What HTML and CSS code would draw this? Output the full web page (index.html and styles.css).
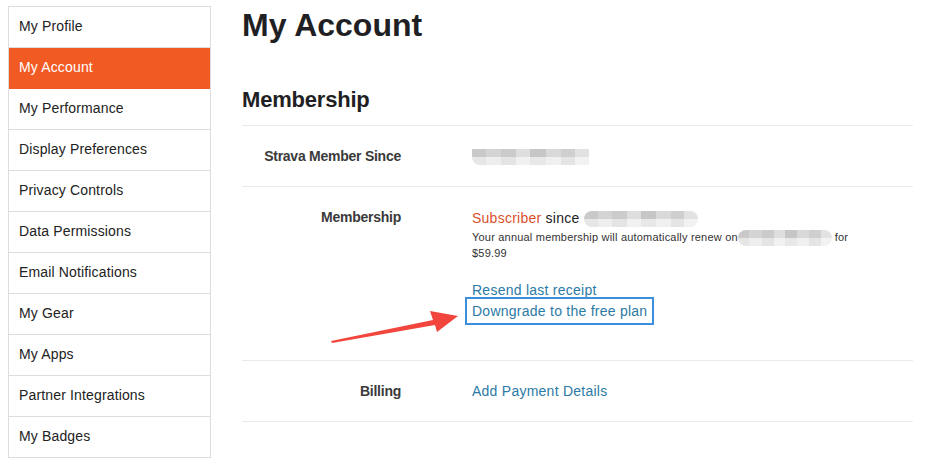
FILE: index.html
```html
<!DOCTYPE html>
<html lang="en">
<head>
  <meta charset="UTF-8">
  <title>My Account</title>
  <link rel="stylesheet" href="styles.css">
</head>
<body>
  <nav class="sidebar">
    <a href="#">My Profile</a>
    <a href="#" class="active">My Account</a>
    <a href="#">My Performance</a>
    <a href="#">Display Preferences</a>
    <a href="#">Privacy Controls</a>
    <a href="#">Data Permissions</a>
    <a href="#">Email Notifications</a>
    <a href="#">My Gear</a>
    <a href="#">My Apps</a>
    <a href="#">Partner Integrations</a>
    <a href="#">My Badges</a>
  </nav>

  <main class="content">
    <h1>My Account</h1>
    <h2>Membership</h2>

    <div class="row">
      <div class="label">Strava Member Since</div>
      <div class="value"><span class="blur blur-since"></span></div>
    </div>

    <div class="row row-tall">
      <div class="label">Membership</div>
      <div class="value">
        <div class="status"><span class="sub">Subscriber</span> since <span class="blur blur-sub"></span></div>
        <p class="note">Your annual membership will automatically renew on<span class="blur blur-date"></span>for<br>$59.99</p>
        <div class="links">
          <a href="#">Resend last receipt</a><br>
          <a href="#" class="boxed">Downgrade to the free plan</a>
        </div>
      </div>
    </div>

    <div class="row">
      <div class="label">Billing</div>
      <div class="value"><a href="#">Add Payment Details</a></div>
    </div>
  </main>

  <!-- annotation arrow -->
  <svg class="arrow" width="950" height="466" viewBox="0 0 950 466">
    <polygon points="331,341 433,320 430,311 458,316 437,332 435,325 332,343" fill="#f2453d"/>
  </svg>
</body>
</html>
```

FILE: styles.css
```css
body {
  margin: 0;
  padding: 6px 8px;
  font-family: 'Liberation Sans', Arial, sans-serif;
  color: #222;
  background: #fff;
  display: flex;
  align-items: flex-start;
}
.sidebar {
  width: 201px;
  border: 1px solid #ddd;
  border-bottom: none;
  display: flex;
  flex-direction: column;
}
.sidebar a {
  display: block;
  height: 39px;
  line-height: 39px;
  padding: 0 0 1px 10px;
  border-bottom: 1px solid #ddd;
  font-size: 14px;
  letter-spacing: 0.15px;
  color: #222;
  text-decoration: none;
}
.sidebar a.active {
  background: #f25a24;
  color: #fff;
  border-bottom-color: #f25a24;
}
.content {
  margin-left: 31px;
  width: 671px;
}
h1 {
  margin: 0;
  font-size: 32px;
  line-height: 38px;
  color: #1f1f24;
}
h2 {
  margin: 43px 0 12px;
  font-size: 22px;
  line-height: 26px;
  letter-spacing: -0.2px;
  color: #1f1f24;
}
.row {
  display: grid;
  grid-template-columns: 159px 1fr;
  gap: 71px;
  border-top: 1px solid #eaeaea;
  padding: 20px 0;
  font-size: 14px;
  line-height: 20px;
}
.row:last-child {
  border-bottom: 1px solid #eaeaea;
}
.row-tall {
  padding-bottom: 39px;
}
.label {
  text-align: right;
  font-weight: bold;
  letter-spacing: -0.25px;
  color: #3a3a3a;
}
.value {
  color: #222;
  letter-spacing: 0.25px;
}
.status {
  line-height: 23px;
}
.sub {
  color: #d9512c;
}
.note {
  margin: 0;
  font-size: 11px;
  line-height: 15px;
  letter-spacing: 0.2px;
  color: #333;
}
.links {
  margin-top: 19px;
}
a {
  color: #2c7aa5;
  text-decoration: none;
}
.boxed {
  display: inline-block;
  margin: 1px -3px 0;
  padding: 0 3px;
  line-height: 20px;
  outline: 2px solid #3b8fdc;
  outline-offset: 2px;
}
.blur {
  display: inline-block;
  vertical-align: middle;
  border-radius: 0 0 8px 8px;
  background:
    linear-gradient(to right, #c9c9c9 0 12%, #d4d4d4 12% 25%, #cbcbcb 25% 38%, #dedede 38% 50%, #c6c6c6 50% 63%, #d9d9d9 63% 76%, #cfcfcf 76% 88%, #e2e2e2 88%) top / 100% 50% no-repeat,
    linear-gradient(to right, #e6e6e6 0 12%, #eeeeee 12% 25%, #e4e4e4 25% 38%, #f1f1f1 38% 50%, #e8e8e8 50% 63%, #f0f0f0 63% 76%, #e5e5e5 76% 88%, #f2f2f2 88%) bottom / 100% 50% no-repeat;
}
.blur-since {
  width: 117px;
  height: 16px;
  border-radius: 0 0 0 8px;
}
.blur-sub {
  width: 114px;
  height: 16px;
  border-radius: 8px;
}
.blur-date {
  width: 94px;
  height: 16px;
  margin: 0 3px 0 0;
  border-radius: 8px;
}
.arrow {
  position: absolute;
  left: 0;
  top: 0;
  pointer-events: none;
}
```
